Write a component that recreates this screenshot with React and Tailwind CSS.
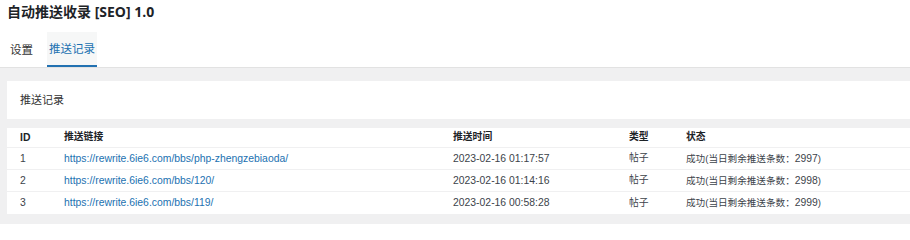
import React from 'react'

const rows = [
    { id: 1, url: 'https://rewrite.6ie6.com/bbs/php-zhengzebiaoda/', time: '2023-02-16 01:17:57', left: 2997 },
    { id: 2, url: 'https://rewrite.6ie6.com/bbs/120/', time: '2023-02-16 01:14:16', left: 2998 },
    { id: 3, url: 'https://rewrite.6ie6.com/bbs/119/', time: '2023-02-16 00:58:28', left: 2999 },
]

const App = () => {
    return (
        <div className='w-[910px] h-[224px] overflow-hidden bg-white text-[#1d2327] font-["Liberation_Sans","Noto_Sans_CJK_SC",sans-serif]'>
            <h1 className='pl-[7px] pt-[2px] h-[30px] text-[14px] font-bold leading-[20px] font-["Open_Sans","Noto_Sans_CJK_SC",sans-serif]'>自动推送收录 [SEO] 1.0</h1>

            <div className='flex items-end h-[38px] pl-[3px] border-b border-[#e2e2e2]'>
                <div className='px-[7px] h-[35px] pt-[3px] flex items-center text-[11.5px] text-[#333]'>设置</div>
                <div className='ml-[7px] w-[50px] h-[35px] pt-[3px] flex items-center justify-center text-[11.5px] text-[#2271b1] bg-[#f6f7f7] border-b-2 border-[#2271b1]'>推送记录</div>
            </div>

            <div className='bg-[#f0f0f1] pl-[7px] pt-[13px] pb-[10px] flex flex-col gap-[9px]'>
                <div className='bg-white h-[38px] flex items-center pl-[13px] text-[11px] text-[#333]'>推送记录</div>

                <div className='bg-white text-[10.4px] text-[#3c434a]'>
                    <div className='grid grid-cols-[44px_389px_176px_57px_1fr] pl-[13px] h-[20px] items-center font-bold text-[#1d2327] border-b border-[#f0f0f1]'>
                        <span>ID</span>
                        <span className='text-[9.8px]'>推送链接</span>
                        <span className='text-[9.8px]'>推送时间</span>
                        <span className='text-[9.8px]'>类型</span>
                        <span className='text-[9.8px]'>状态</span>
                    </div>
                    {rows.map((r, i) => (
                        <div key={r.id} className={'grid grid-cols-[44px_389px_176px_57px_1fr] pl-[13px] h-[22px] items-center ' + (i < rows.length - 1 ? 'border-b border-[#f0f0f1]' : '')}>
                            <span>{r.id}</span>
                            <a className='text-[#2271b1]'>{r.url}</a>
                            <span>{r.time}</span>
                            <span className='text-[9.8px]'>帖子</span>
                            <span className='text-[9.6px]'>成功(当日剩余推送条数：<span className='text-[10.4px]'>{r.left}</span>)</span>
                        </div>
                    ))}
                </div>
            </div>
        </div>
    )
}

export default App
